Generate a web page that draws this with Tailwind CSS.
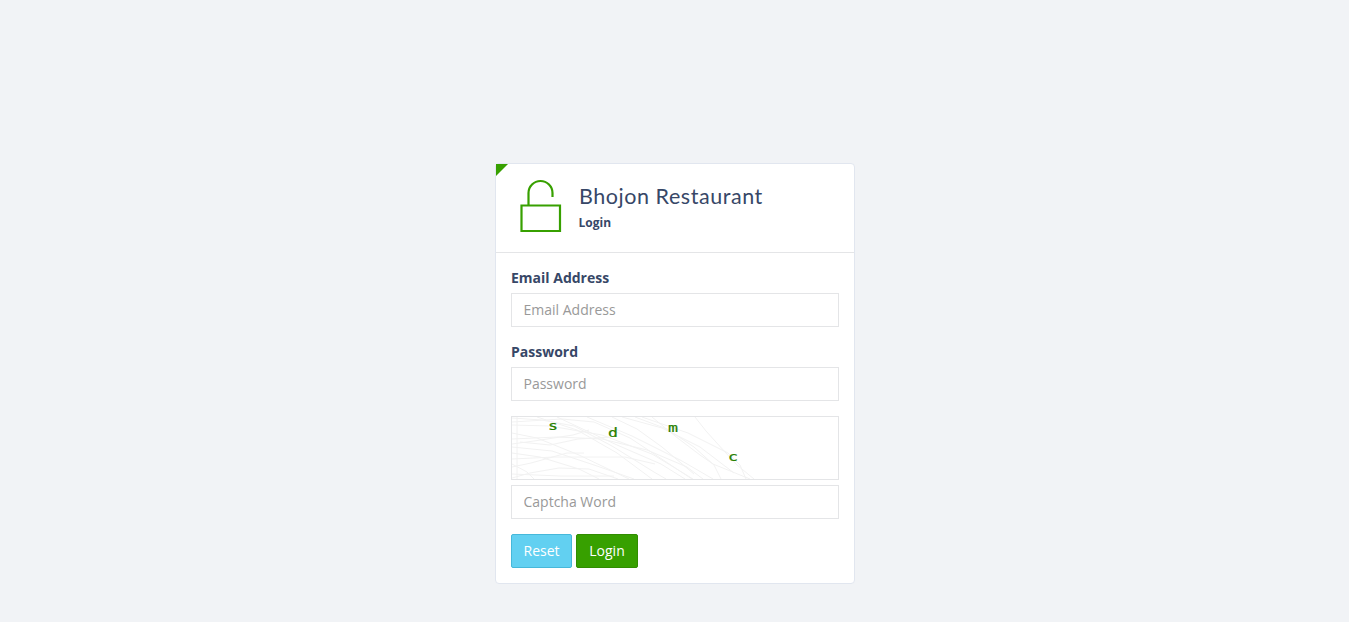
<!DOCTYPE html>
<html lang="en">
<head>
<meta charset="utf-8">
<title>Bhojon Restaurant</title>
<script src="https://cdn.jsdelivr.net/npm/@tailwindcss/browser@4"></script>
</head>
<body class="h-screen overflow-hidden bg-[#f1f3f6] pt-[163px] font-['Open_Sans',sans-serif] text-sm text-[#374767]">
<main class="relative ml-[495px] h-[421px] w-[360px] rounded border border-[#e1e6ef] bg-white">
  <svg class="absolute left-0 top-0" width="12" height="12"><path d="M0 0H12L0 12Z" fill="#37a000"/></svg>
  <header class="flex h-[89px] border-b border-[#e4e5e7] pl-[24px] pt-[15px]">
    <svg class="shrink-0" width="42" height="54" viewBox="0 0 42 54" fill="none" stroke="#37a000" stroke-width="2.2"><path d="M1.5 26.5H40V52H1.5ZM8.5 27V14a12 12 0 0 1 24 0V18"/></svg>
    <div class="pl-[16.5px]">
      <h1 class="mt-[4px] whitespace-nowrap pl-[0.5px] font-['Lato',sans-serif] text-[21.5px] leading-[26px] tracking-[0.55px]">Bhojon Restaurant</h1>
      <p class="mt-[5px] text-xs font-bold leading-[17px]">Login</p>
    </div>
  </header>
  <form class="px-[15px] pt-[15px]">
    <label for="email" class="block h-[25px] font-bold leading-5">Email Address</label>
    <input id="email" type="text" placeholder="Email Address" class="block h-[34px] w-full border border-[#e4e5e7] px-[11.5px] pb-[2px] placeholder:text-[#999]">
    <label for="password" class="mt-[15px] block h-[25px] font-bold leading-5">Password</label>
    <input id="password" type="password" placeholder="Password" class="block h-[34px] w-full border border-[#e4e5e7] px-[11.5px] pb-[2px] placeholder:text-[#999]">
    <div class="mt-[15px] h-16 border border-[#e4e5e7]">
      <svg class="block" width="326" height="62" viewBox="0 0 326 62">
        <g fill="none" stroke="#f2f2f2" stroke-width="1">
          <path d="M0 1L30 3L62 9L100 29L142 55L154 62M0 5L50 2L82 5L118 21L180 62M0 8L38 9L90 18L140 37L181 62M0 22L45 20L90 22L135 33L175 50L191 62M0 27L22 24L61 18L77 13M0 16L25 21L67 38L117 62M0 30L40 34L85 49L122 62M0 36L28 40L67 52L87 62M0 42L42 40L113 40L143 47M0 50L19 46L55 36L72 36M0 61L18 56L47 51L77 52L106 62M0 57L48 59L102 59M0 47L15 55L22 62M8 25L38 28L66 22L99 20"/>
          <path d="M25 0L65 13L105 36L140 62M75 0L120 19L170 44L201 62M100 0L125 12L150 30L182 57M110 0L150 11L188 30L222 56M123 0L155 12L182 30L202 48L209 62M140 0L163 19L188 38L201 47L238 62M130 0L176 16L216 36L228 48L234 62M183 0L194 14L213 35L225 48L242 62M45 0L75 14L105 28L149 47L173 62M5 0V62"/>
        </g>
        <g fill="#298000" stroke="#298000" stroke-width=".2" class="font-['DejaVu_Sans_Mono',monospace] text-[12px]">
          <text x="36" y="13" textLength="10" lengthAdjust="spacingAndGlyphs">s</text>
          <text x="96" y="20" textLength="10" lengthAdjust="spacingAndGlyphs">d</text>
          <text x="156" y="15" textLength="10" lengthAdjust="spacingAndGlyphs">m</text>
          <text x="216" y="44" textLength="10" lengthAdjust="spacingAndGlyphs">c</text>
        </g>
      </svg>
    </div>
    <input type="text" aria-label="Captcha Word" placeholder="Captcha Word" class="mt-[5px] block h-[34px] w-full border border-[#e4e5e7] px-[11.5px] pb-[2px] placeholder:text-[#999]">
    <div class="mt-[15px] flex gap-1">
      <button type="reset" class="h-[34px] w-[61px] rounded-[2px] border border-[#46b8da] bg-[#62d0f1] text-white">Reset</button>
      <button type="button" class="h-[34px] w-[62px] rounded-[2px] border border-[#318d01] bg-[#37a000] text-white">Login</button>
    </div>
  </form>
</main>
</body>
</html>
